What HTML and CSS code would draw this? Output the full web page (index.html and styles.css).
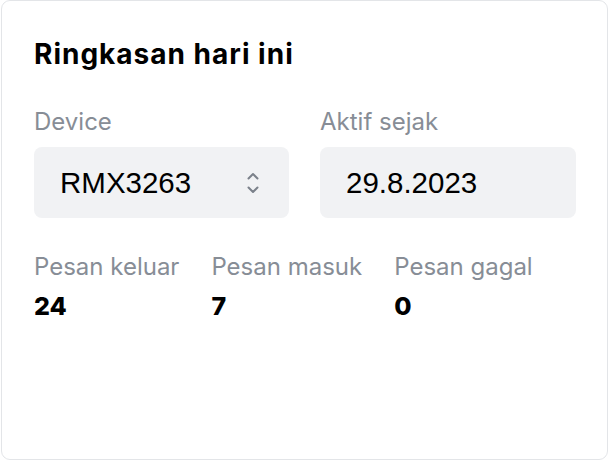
FILE: index.html
```html
<!DOCTYPE html>
<html lang="id">
<head>
<meta charset="utf-8">
<title>Ringkasan hari ini</title>
<link rel="stylesheet" href="styles.css">
</head>
<body>
<section class="card">
  <h2 class="title">Ringkasan hari ini</h2>
  <div class="fields">
    <div class="field">
      <div class="label">Device</div>
      <div class="box select">
        <span>RMX3263</span>
        <svg class="chev" width="16" height="24" viewBox="0 0 16 24" fill="none" stroke="#7b818a" stroke-width="2" stroke-linecap="round" stroke-linejoin="round">
          <path d="M3.5 7.5 L8 3 L12.5 7.5"/>
          <path d="M3.5 16.5 L8 21 L12.5 16.5"/>
        </svg>
      </div>
    </div>
    <div class="field">
      <div class="label">Aktif sejak</div>
      <div class="box"><span>29.8.2023</span></div>
    </div>
  </div>
  <div class="stats">
    <div class="stat">
      <div class="label">Pesan keluar</div>
      <div class="num">24</div>
    </div>
    <div class="stat">
      <div class="label">Pesan masuk</div>
      <div class="num">7</div>
    </div>
    <div class="stat">
      <div class="label">Pesan gagal</div>
      <div class="num">0</div>
    </div>
  </div>
</section>
</body>
</html>
```
FILE: styles.css
```css
html, body {
  margin: 0;
  padding: 0;
  background: #ffffff;
}
body {
  padding-left: 1px;
}
.card {
  box-sizing: border-box;
  width: 607px;
  height: 460px;
  border: 1px solid #e3e5e8;
  border-radius: 9px;
  padding: 34px 31px 0 32px;
  font-family: Inter, "Liberation Sans", sans-serif;
}
.title {
  margin: 0;
  font-family: Inter, sans-serif;
  font-weight: 700;
  font-size: 28px;
  line-height: 38px;
  letter-spacing: 1px;
  color: #000;
}
.fields {
  display: grid;
  grid-template-columns: 255px 256px;
  column-gap: 31px;
  margin-top: 34px;
}
.label {
  font-family: Inter, sans-serif;
  font-size: 24px;
  line-height: 30px;
  color: #878d96;
  white-space: nowrap;
}
.box {
  margin-top: 10px;
  height: 71px;
  border-radius: 8px;
  background: #f1f2f4;
  display: flex;
  align-items: center;
  padding: 0 28px 0 26px;
  font-family: "Liberation Sans", Arial, sans-serif;
  font-size: 29.5px;
  color: #000;
}
.select {
  justify-content: space-between;
}
.chev {
  display: block;
}
.stats {
  display: flex;
  gap: 32px;
  margin-top: 34px;
}
.num {
  margin-top: 9px;
  font-family: Inter, sans-serif;
  font-weight: 800;
  font-size: 25px;
  line-height: 30px;
  color: #000;
}
```
